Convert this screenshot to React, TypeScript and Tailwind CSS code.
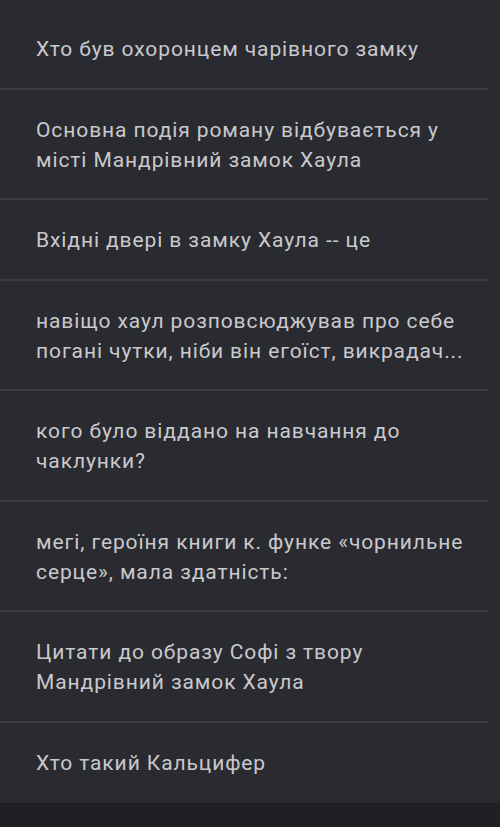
const items = [
  'Хто був охоронцем чарівного замку',
  'Основна подія роману відбувається у місті Мандрівний замок Хаула',
  'Вхідні двері в замку Хаула -- це',
  'навіщо хаул розповсюджував про себе погані чутки, ніби він егоїст, викрадач...',
  'кого було віддано на навчання до чаклунки?',
  'мегі, героїня книги к. функе «чорнильне серце», мала здатність:',
  'Цитати до образу Софі з твору Мандрівний замок Хаула',
  'Хто такий Кальцифер',
];

export default function App() {
  return (
    <div className="w-[500px] h-[827px] flex flex-col bg-[#1f2024] font-['Roboto',sans-serif]">
      <ul className="bg-[#2a2b30] pt-[9px]">
        {items.map((text, i) => (
          <li
            key={i}
            className={
              i < items.length - 1
                ? 'pl-9 pr-3 mr-3 pt-[25px] pb-[23.5px] text-[21px] tracking-[0.9px] leading-[30px] text-[#c9c9cd] border-b-2 border-[#3c3d43]'
                : 'pl-9 pr-3 mr-3 pt-[25px] pb-[25.5px] text-[21px] tracking-[0.9px] leading-[30px] text-[#c9c9cd]'
            }
          >
            {text}
          </li>
        ))}
      </ul>
    </div>
  );
}
